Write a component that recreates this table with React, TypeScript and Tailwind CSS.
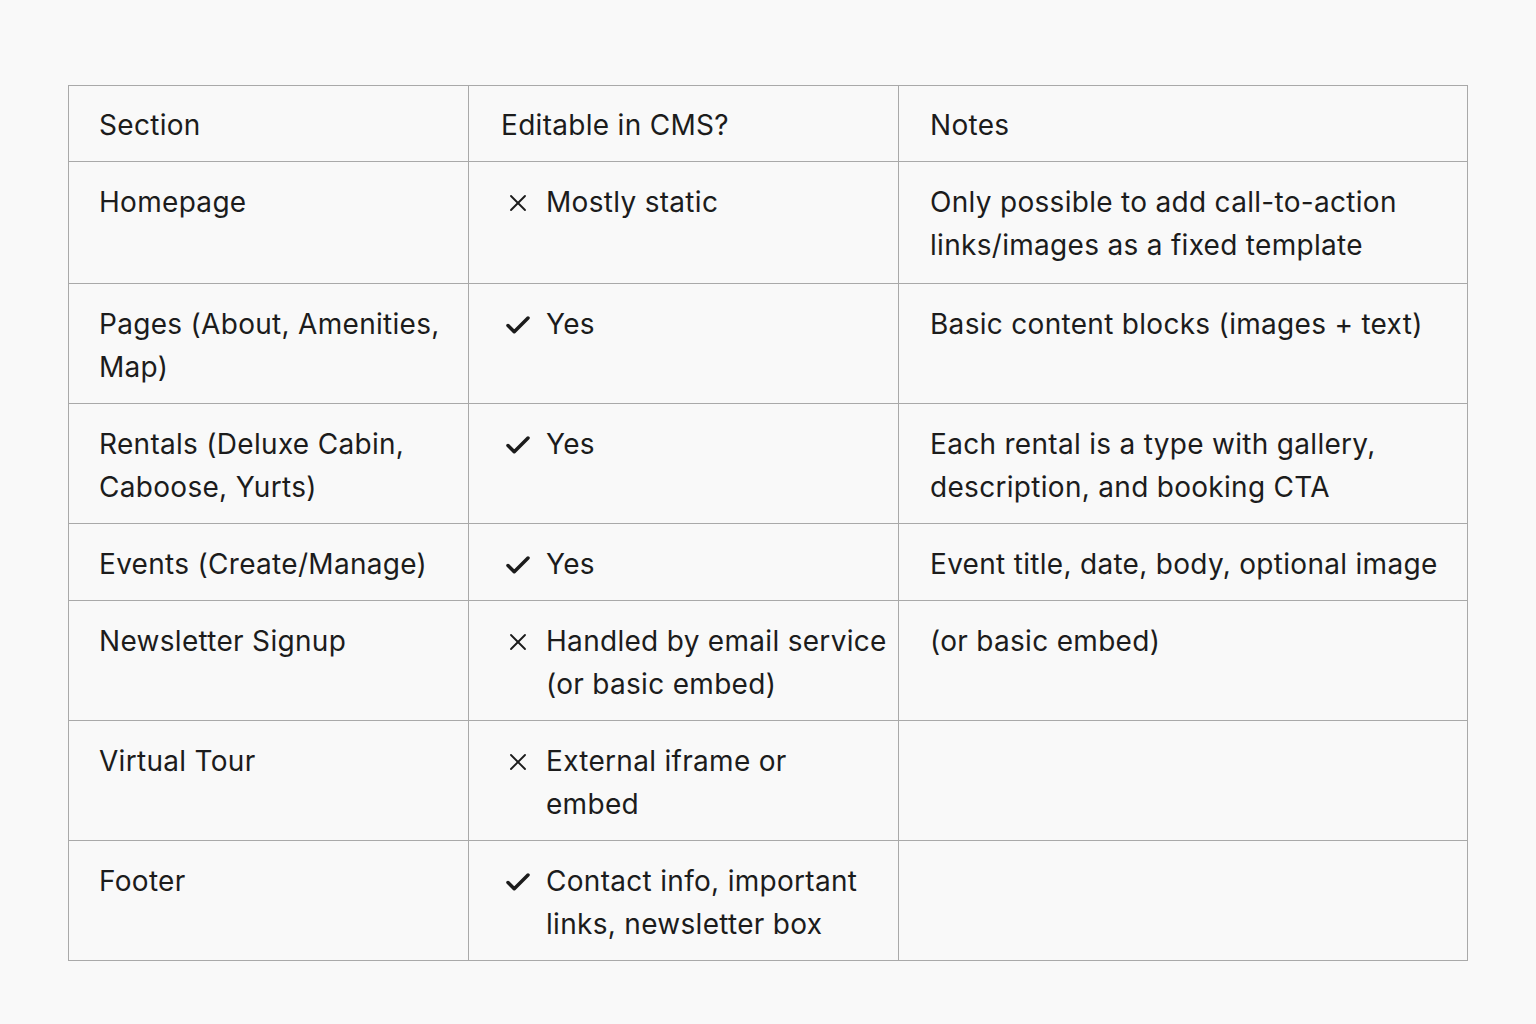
import { Check, X } from "lucide-react";

type Row = {
  section: string;
  ok: boolean;
  editable: string[];
  notes: string;
};

const rows: Row[] = [
  {
    section: "Homepage",
    ok: false,
    editable: ["Mostly static"],
    notes: "Only possible to add call-to-action links/images as a fixed template",
  },
  { section: "Pages (About, Amenities, Map)", ok: true, editable: ["Yes"], notes: "Basic content blocks (images + text)" },
  {
    section: "Rentals (Deluxe Cabin, Caboose, Yurts)",
    ok: true,
    editable: ["Yes"],
    notes: "Each rental is a type with gallery, description, and booking CTA",
  },
  { section: "Events (Create/Manage)", ok: true, editable: ["Yes"], notes: "Event title, date, body, optional image" },
  {
    section: "Newsletter Signup",
    ok: false,
    editable: ["Handled by email service", "(or basic embed)"],
    notes: "(or basic embed)",
  },
  { section: "Virtual Tour", ok: false, editable: ["External iframe or", "embed"], notes: "" },
  { section: "Footer", ok: true, editable: ["Contact info, important", "links, newsletter box"], notes: "" },
];

const App = () => {
  return (
    <div className="min-h-screen bg-[#f9f9f9] pt-[85px] pl-[68px] text-[#1c1c1c] font-['Inter',sans-serif] text-[28px] tracking-[0.3px] leading-[43px]">
      <table className="table-fixed border-collapse w-[1399px]">
        <colgroup>
          <col className="w-[400px]" />
          <col className="w-[430px]" />
          <col className="w-[569px]" />
        </colgroup>
        <thead>
          <tr>
            <th className="border border-[#a9a9a9] text-left font-normal pl-[30px] pr-4 pt-[18px] pb-[14px] align-middle">Section</th>
            <th className="border border-[#a9a9a9] text-left font-normal pl-[32px] pr-4 pt-[18px] pb-[14px] align-middle">Editable in CMS?</th>
            <th className="border border-[#a9a9a9] text-left font-normal pl-[31px] pr-4 pt-[18px] pb-[14px] align-middle">Notes</th>
          </tr>
        </thead>
        <tbody>
          {rows.map((r, i) => (
            <tr key={r.section} className={i === 0 ? "h-[122px]" : ""}>
              <td className="border border-[#a9a9a9] align-top pl-[30px] pr-4 pt-[19px] pb-[14px] h-[77px]">{r.section}</td>
              <td className="border border-[#a9a9a9] align-top pl-[34px] pr-2 pt-[19px] pb-[14px]">
                <div className="flex gap-[13px]">
                  <div className="w-[30px] h-[43px] shrink-0 flex items-center justify-center">
                    {r.ok ? (
                      <Check className="w-[33px] h-[33px] mt-[1px]" strokeWidth={2.8} />
                    ) : (
                      <X className="w-[28px] h-[28px]" strokeWidth={1.6} />
                    )}
                  </div>
                  <div className="flex flex-col">
                    {r.editable.map((line) => (
                      <span key={line} className="whitespace-nowrap">
                        {line}
                      </span>
                    ))}
                  </div>
                </div>
              </td>
              <td className="border border-[#a9a9a9] align-top pl-[31px] pr-4 pt-[19px] pb-[14px]">{r.notes}</td>
            </tr>
          ))}
        </tbody>
      </table>
    </div>
  );
};

export default App;
